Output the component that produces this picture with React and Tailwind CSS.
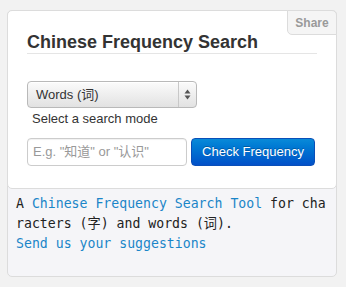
export default function App() {
  return (
    <div className="w-[346px] h-[287px] bg-[#f2f2f2] pt-[10px] pl-[7px]" style={{ fontFamily: '"Liberation Sans", "Noto Sans CJK SC", sans-serif' }}>
      <div className="w-[330px] h-[267px] border border-[#dcdcdc] rounded-[5px] bg-[#f5f5f8] flex flex-col">
        <div className="relative bg-white border border-[#dcdcdc] rounded-[5px] -mx-px -mt-px h-[179px] px-[19px] pt-[20px]">
          <div className="absolute top-[-1px] right-[-1px] w-[50px] h-[25px] bg-[#f5f5f5] border border-[#dcdcdc] rounded-bl-[5px] rounded-tr-[5px] flex items-center justify-center text-[12px] font-bold text-[#9a9a9a]">
            Share
          </div>
          <div className="w-[290px] border-b border-[#e5e5e5] text-[18px] leading-[22px] font-bold text-[#333]">
            Chinese Frequency Search
          </div>
          <div className="mt-[27px] w-[170px] h-[27px] border border-[#b9b9b9] rounded-[4px] bg-gradient-to-b from-[#fbfbfb] to-[#e2e2e2] flex items-center text-[13px] text-[#333] shadow-[inset_0_1px_0_#fff]">
            <span className="flex-1 pl-[8px]">Words (词)</span>
            <span className="w-[18px] h-full border-l border-[#c8c8c8] flex items-center justify-center">
              <svg width="7" height="11" viewBox="0 0 7 11">
                <path d="M3.5 0.5 L6.5 4.5 L0.5 4.5 Z" fill="#555" />
                <path d="M3.5 10.5 L6.5 6.5 L0.5 6.5 Z" fill="#555" />
              </svg>
            </span>
          </div>
          <div className="pl-[5px] mt-[2px] text-[13px] leading-[18px] text-[#333]">Select a search mode</div>
          <div className="mt-[10px] flex gap-[4px]">
            <div className="w-[160px] h-[28px] border border-[#cccccc] rounded-[4px] bg-white flex items-center pl-[5px] text-[13px] text-[#999] shadow-[inset_0_1px_1px_rgba(0,0,0,0.06)]">
              E.g. "知道" or "认识"
            </div>
            <div className="w-[124px] h-[28px] rounded-[4px] border border-[#0a4fb8] bg-gradient-to-b from-[#0a8ad8] to-[#0350c8] flex items-center justify-center text-[13px] text-white [text-shadow:0_-1px_0_rgba(0,0,0,0.25)]">
              Check Frequency
            </div>
          </div>
        </div>
        <div className="pl-[8px] pr-[6px] pt-[5px] text-[13.2px] leading-[20px] text-[#222] break-all" style={{ fontFamily: '"DejaVu Sans Mono", "Noto Sans CJK SC", monospace' }}>
          A <span className="text-[#1a85c8]">Chinese Frequency Search Tool</span> for characters (字) and words (词).
          <br />
          <span className="text-[#1a85c8]">Send us your suggestions</span>
        </div>
      </div>
    </div>
  );
}
